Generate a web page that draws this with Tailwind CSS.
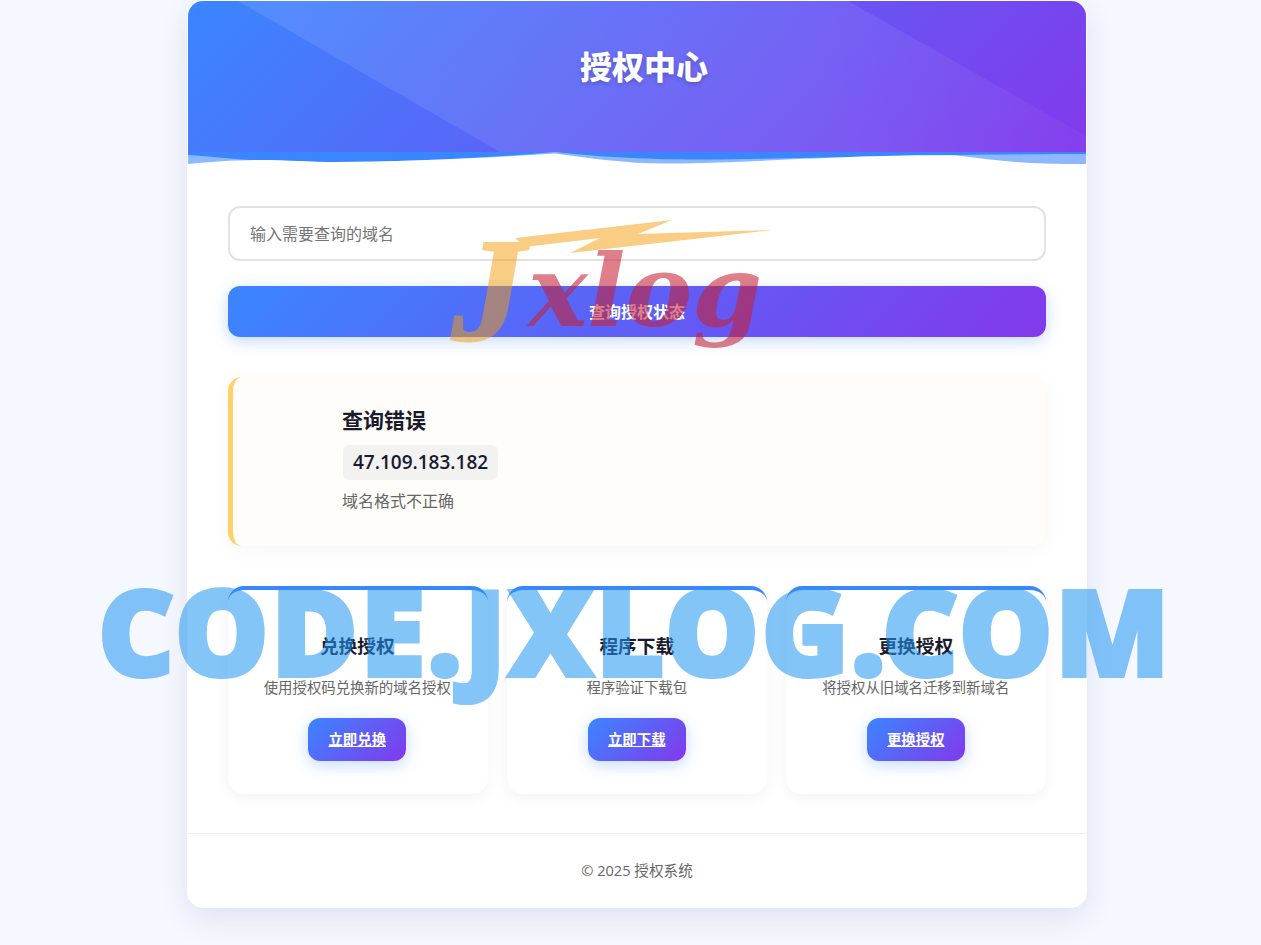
<!DOCTYPE html>
<html lang="zh-CN">
<head>
  <meta charset="UTF-8">
  <title>授权中心</title>
  <script src="https://cdn.jsdelivr.net/npm/@tailwindcss/browser@4"></script>
</head>
<body class="relative h-[945px] overflow-hidden bg-[#f5f8ff] text-[#1a1a2e] font-['Open_Sans','Noto_Sans_CJK_SC',sans-serif]">

  <!-- Main card -->
  <div class="ml-[187px] w-[900px] h-[908px] bg-white border border-white rounded-[16px] overflow-hidden shadow-[0_10px_30px_rgba(30,40,110,0.1)]">

    <!-- Header -->
    <div class="relative h-[163px] pb-[32px] flex items-center justify-center bg-[linear-gradient(135deg,#3a86ff,#8338ec)]">
      <svg class="absolute left-0 top-0" width="898" height="163" viewBox="188 1 898 163">
        <defs>
          <linearGradient id="sheen" x1="0" y1="0" x2="1" y2="0">
            <stop offset="0" stop-color="#ffffff" stop-opacity="0.1"/>
            <stop offset="0.7" stop-color="#ffffff" stop-opacity="0.08"/>
            <stop offset="1" stop-color="#ffffff" stop-opacity="0.03"/>
          </linearGradient>
        </defs>
        <polygon points="238,1 848,1 1086,136 1086,152 500,152" fill="url(#sheen)"/>
        <rect x="188" y="152" width="898" height="12" fill="#3a86ff"/>
        <path d="M188 155 C215 157 240 160 270 161 C300 162 340 162.500 380 161.500 C440 160 500 157 555 152 C590 156 640 159.500 700 159.500 C780 159 880 156 957 155 C1000 154.500 1050 154 1086 154 L1086 164 L188 164 Z" fill="#8db8ff"/>
        <path d="M188 164 C210 162 235 160 260 160 C290 160 310 162 335 162 C400 161.500 480 158.500 555 153.500 C590 158.500 630 164 670 163.500 C730 163 780 159.500 850 157 C890 155.500 930 155 957 155.500 C985 159 1015 163 1045 163.500 C1060 164 1075 164 1086 164 L1086 164 L188 164 Z" fill="#ffffff"/>
      </svg>
      <h1 class="relative pl-[14px] text-[32px] leading-[40px] font-black text-white [text-shadow:0_2px_4px_rgba(0,0,0,0.2)]">授权中心</h1>
    </div>

    <!-- Body -->
    <div class="px-[40px] pt-[42px]">
      <div class="h-[55px] w-[818px] border-2 border-[#e0e3e3] rounded-[12px] pl-[20px] flex items-center text-[16px] text-[#757575]">输入需要查询的域名</div>

      <button class="mt-[25px] h-[51px] w-[818px] rounded-[12px] text-white text-[16px] font-semibold bg-[linear-gradient(135deg,#3a86ff,#8338ec)] shadow-[0_4px_15px_rgba(58,134,255,0.3)]">查询授权状态</button>

      <!-- Result -->
      <div class="mt-[40px] h-[169px] w-[818px] pl-[109px] pt-[27px] border-l-[5px] border-[#ffd166] rounded-[14px] bg-[#fffdf9] shadow-[0_4px_20px_rgba(0,0,0,0.04)]">
        <h3 class="text-[21px] leading-[32px] font-bold">查询错误</h3>
        <div class="mt-[9px] ml-px w-fit h-[35px] px-[10px] flex items-center rounded-[6px] bg-[#f2f2f0] text-[19px] font-semibold">47.109.183.182</div>
        <p class="mt-[8px] text-[16px] leading-[26px] text-[#666666]">域名格式不正确</p>
      </div>

      <!-- Feature cards -->
      <div class="mt-[40px] w-[817.500px] grid grid-cols-3 gap-[19.500px]">
        <div class="h-[208px] border-t-4 border-[#3a86ff] rounded-[16px] bg-white shadow-[0_4px_15px_rgba(0,0,0,0.05)] flex flex-col items-center pt-[41px]">
          <h4 class="mr-px text-[18.700px] leading-[30px] font-bold">兑换授权</h4>
          <p class="mr-px mt-[16px] text-[14.400px] leading-[22px] text-[#666666]">使用授权码兑换新的域名授权</p>
          <a href="#" class="mr-px mt-[19px] w-[98px] h-[43px] flex items-center justify-center rounded-[12px] text-white text-[14.400px] font-semibold underline bg-[linear-gradient(135deg,#3a86ff,#8338ec)] shadow-[0_4px_15px_rgba(58,134,255,0.3)]">立即兑换</a>
        </div>
        <div class="h-[208px] border-t-4 border-[#3a86ff] rounded-[16px] bg-white shadow-[0_4px_15px_rgba(0,0,0,0.05)] flex flex-col items-center pt-[41px]">
          <h4 class="text-[18.700px] leading-[30px] font-bold">程序下载</h4>
          <p class="mt-[16px] text-[14.400px] leading-[22px] text-[#666666]">程序验证下载包</p>
          <a href="#" class="mt-[19px] w-[98px] h-[43px] flex items-center justify-center rounded-[12px] text-white text-[14.400px] font-semibold underline bg-[linear-gradient(135deg,#3a86ff,#8338ec)] shadow-[0_4px_15px_rgba(58,134,255,0.3)]">立即下载</a>
        </div>
        <div class="h-[208px] border-t-4 border-[#3a86ff] rounded-[16px] bg-white shadow-[0_4px_15px_rgba(0,0,0,0.05)] flex flex-col items-center pt-[41px]">
          <h4 class="text-[18.700px] leading-[30px] font-bold">更换授权</h4>
          <p class="mt-[16px] text-[14.400px] leading-[22px] text-[#666666]">将授权从旧域名迁移到新域名</p>
          <a href="#" class="mt-[19px] w-[98px] h-[43px] flex items-center justify-center rounded-[12px] text-white text-[14.400px] font-semibold underline bg-[linear-gradient(135deg,#3a86ff,#8338ec)] shadow-[0_4px_15px_rgba(58,134,255,0.3)]">更换授权</a>
        </div>
      </div>
    </div>

    <!-- Footer -->
    <div class="mt-[39px] h-[75px] border-t border-[#eeeeee] flex items-center justify-center text-[14.600px] text-[#666666]">© 2025 授权系统</div>
  </div>

  <!-- Logo watermark -->
  <div class="absolute left-[440px] top-[210px] w-[340px] h-[150px] pointer-events-none">
    <div class="absolute inset-0 opacity-50">
      <svg class="absolute left-0 top-0" width="340" height="150" viewBox="440 210 340 150">
        <polygon points="515,238 672,220 638,234 772,230 570,253 600,238 525,247" fill="#f59e0b"/>
      </svg>
      <span class="absolute left-[12px] top-[8px] text-[146px] leading-[146px] font-bold italic text-[#f59e0b] [-webkit-text-stroke:3px_#f59e0b] font-['Liberation_Serif',serif]">J</span>
    </div>
    <span class="absolute left-[88px] top-[25px] text-[100px] leading-[112px] font-bold italic text-[#c82031] opacity-57 font-['DejaVu_Serif',serif]">xlog</span>
  </div>

  <!-- Text watermark -->
  <div class="absolute left-[98px] top-[548px] text-[118px] leading-[166px] font-black tracking-[2.500px] whitespace-nowrap text-[#2196f3] opacity-55 [-webkit-text-stroke:4px_#2196f3] pointer-events-none font-['Noto_Sans',sans-serif]">CODE.JXLOG.COM</div>

</body>
</html>
